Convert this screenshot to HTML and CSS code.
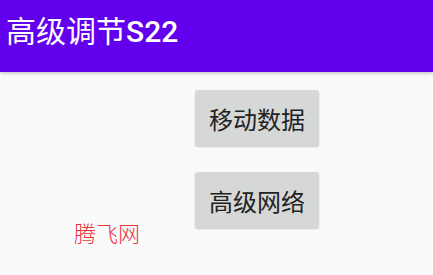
FILE: index.html
```html
<!DOCTYPE html>
<html lang="zh">
<head>
    <meta charset="UTF-8">
    <meta name="viewport" content="width=device-width, initial-scale=1.0">
    <title>高级调节S22</title>
    <link rel="stylesheet" href="styles.css">
</head>
<body>
    <div class="appbar">
        <p class="title">高级调节<span class="num">S22</span></p>
    </div>
    <div class="content">
        <div class="leftcol">
            <p class="brand">腾飞网</p>
        </div>
        <div class="buttons">
            <div class="btn">移动数据</div>
            <div class="btn">高级网络</div>
        </div>
    </div>
</body>
</html>
```
FILE: styles.css
```css
body{
    margin: 0;
    background-color: #fafafa;
    font-family: Roboto, "Noto Sans CJK SC", sans-serif;
    width: 433px;
    height: 275px;
    overflow: hidden;
}
.appbar{
    background-color: #6200ee;
    height: 72px;
    box-shadow: 0 1px 4px rgba(0,0,0,0.25);
    display: flex;
    align-items: center;
}
.title{
    margin: 0 0 0 6px;
    color: white;
    font-size: 30px;
    line-height: 30px;
    padding-bottom: 9px;
    font-weight: 400;
}
.num{
    font-weight: 500;
}
.content{
    display: flex;
}
.leftcol{
    width: 195px;
    padding-top: 148px;
}
.brand{
    margin: 0 0 0 74px;
    color: #e8323a;
    font-size: 22px;
    line-height: 24px;
    font-family: "Noto Sans CJK SC", serif;
    font-weight: 300;
}
.buttons{
    display: flex;
    flex-direction: column;
    gap: 26px;
    padding-top: 18px;
}
.btn{
    width: 124px;
    height: 56px;
    background-color: #d6d7d7;
    border-radius: 3px;
    box-shadow: 0 1px 2px rgba(0,0,0,0.2);
    display: flex;
    align-items: center;
    justify-content: center;
    font-size: 24px;
    color: #222;
}
```
